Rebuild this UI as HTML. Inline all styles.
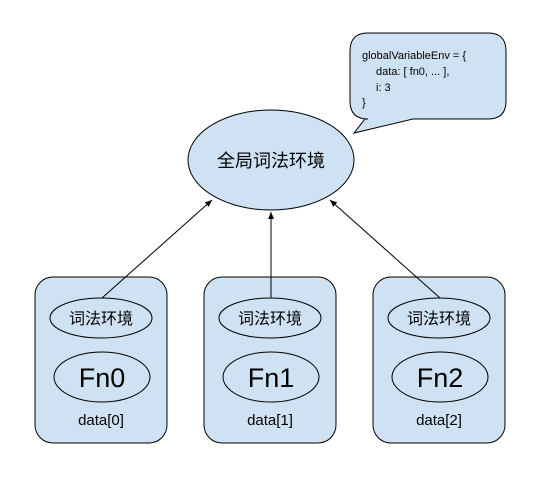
<!DOCTYPE html>
<html><head><meta charset="utf-8"><style>
html,body{margin:0;padding:0;background:#fff;width:549px;height:483px;overflow:hidden}
svg text{font-family:"Liberation Sans","Noto Sans CJK SC",sans-serif;fill:#000}
</style></head><body>
<svg width="549" height="483" viewBox="0 0 549 483" xmlns="http://www.w3.org/2000/svg">
<defs><marker id="a" markerWidth="8" markerHeight="8" refX="7" refY="4" orient="auto" markerUnits="userSpaceOnUse"><path d="M0,1 L7,4 L0,7 Z" fill="#000"/></marker></defs>
<g stroke="#000" stroke-width="1" fill="#cfe2f3">
<path d="M368,33 H488 Q506,33 506,51 V101 Q506,119 488,119 H413 L354,133 L365,119 H368 Q350,119 350,101 V51 Q350,33 368,33 Z"/>
<ellipse cx="271" cy="160" rx="83" ry="50"/>
<rect x="35" y="277" width="132" height="166" rx="18"/>
<rect x="204" y="277" width="132" height="166" rx="18"/>
<rect x="373" y="277" width="132" height="166" rx="18"/>
<ellipse cx="101" cy="318" rx="51" ry="20"/>
<ellipse cx="270" cy="318" rx="51" ry="20"/>
<ellipse cx="439" cy="318" rx="51" ry="20"/>
<ellipse cx="102" cy="377" rx="48" ry="25"/>
<ellipse cx="271" cy="377" rx="48" ry="25"/>
<ellipse cx="440" cy="377" rx="48" ry="25"/>
</g>
<g stroke="#000" stroke-width="1" marker-end="url(#a)">
<line x1="102" y1="298" x2="212" y2="200"/>
<line x1="271" y1="298" x2="271" y2="212"/>
<line x1="440" y1="298" x2="330" y2="200"/>
</g>
<g font-size="11">
<text x="362" y="59">globalVariableEnv = {</text>
<text x="376" y="75">data: [ fn0, ... ],</text>
<text x="376" y="91">i: 3</text>
<text x="362" y="106">}</text>
</g>
<text x="271" y="167" font-size="18" text-anchor="middle">全局词法环境</text>
<g font-size="16" text-anchor="middle">
<text x="101" y="324">词法环境</text><text x="270" y="324">词法环境</text><text x="439" y="324">词法环境</text>
</g>
<g font-size="27" text-anchor="middle">
<text x="102" y="387">Fn0</text><text x="271" y="387">Fn1</text><text x="440" y="387">Fn2</text>
</g>
<g font-size="15" text-anchor="middle">
<text x="101" y="425">data[0]</text><text x="270" y="425">data[1]</text><text x="439" y="425">data[2]</text>
</g>
</svg>
</body></html>
